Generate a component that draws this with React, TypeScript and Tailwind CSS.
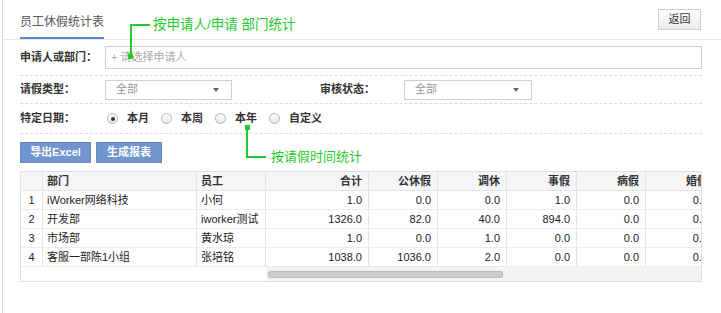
import React from "react";

const font = { fontFamily: '"Liberation Sans", "Noto Sans CJK SC", sans-serif' };

type Row = { no: number; dept: string; emp: string; vals: string[] };

const rows: Row[] = [
  { no: 1, dept: "iWorker网络科技", emp: "小何", vals: ["1.0", "0.0", "0.0", "1.0", "0.0", "0.0"] },
  { no: 2, dept: "开发部", emp: "iworker测试", vals: ["1326.0", "82.0", "40.0", "894.0", "0.0", "0.0"] },
  { no: 3, dept: "市场部", emp: "黄水琼", vals: ["1.0", "0.0", "1.0", "0.0", "0.0", "0.0"] },
  { no: 4, dept: "客服一部陈1小组", emp: "张培铭", vals: ["1038.0", "1036.0", "2.0", "0.0", "0.0", "0.0"] },
];

const numCols = [
  { title: "合计", w: "w-[103px]" },
  { title: "公休假", w: "w-[69px]" },
  { title: "调休", w: "w-[69px]" },
  { title: "事假", w: "w-[70px]" },
  { title: "病假", w: "w-[69px]" },
  { title: "婚假", w: "w-[69px]" },
];

function Select({ width }: { width: string }) {
  return (
    <div className={`${width} h-[20px] border border-[#cfcfcf] bg-white flex items-center justify-between pl-[10px] pr-[12px]`}>
      <span className="text-[11px] text-[#999]">全部</span>
      <span className="w-0 h-0 border-l-[3px] border-r-[3px] border-t-[4px] border-l-transparent border-r-transparent border-t-[#666]" />
    </div>
  );
}

function Radio({ label, checked }: { label: string; checked?: boolean }) {
  return (
    <div className="flex items-center mr-[12px]">
      <span className="w-[11px] h-[11px] rounded-full border border-[#b5b5b5] bg-gradient-to-b from-white to-[#e8e8e8] flex items-center justify-center">
        {checked && <span className="w-[4px] h-[4px] rounded-full bg-[#333]" />}
      </span>
      <span className="ml-[9px] text-[11px] text-[#333] font-bold">{label}</span>
    </div>
  );
}

export default function App() {
  return (
    <div className="w-[721px] h-[313px] bg-white relative overflow-hidden" style={font}>
      <div className="ml-[2px] h-full border-l border-[#d4d4d4]">
        {/* Header */}
        <div className="h-[40px] flex items-end justify-between border-b border-[#e6e6e6] pr-[20px]">
          <div className="ml-[17px] w-[84px] h-[40px] flex items-center justify-center pt-[8px] border-b-2 border-[#5a88cf] text-[12px] text-[#555]">
            员工休假统计表
          </div>
          <div className="self-start mt-[9px] w-[43px] h-[21px] border border-[#cfcfcf] bg-gradient-to-b from-white to-[#ececec] flex items-center justify-center text-[11px] text-[#333]">
            返回
          </div>
        </div>

        {/* Filters */}
        <div className="ml-[17px] w-[682px]">
          <div className="h-[36px] flex items-center border-b border-dashed border-[#dcdcdc]">
            <span className="w-[85px] text-[11px] font-bold text-[#333]">申请人或部门：</span>
            <div className="flex-1 h-[23px] border border-[#cfcfcf] flex items-center pl-[5px] text-[11px] text-[#aaa]">
              + 请选择申请人
            </div>
          </div>
          <div className="h-[28px] flex items-center border-b border-dashed border-[#dcdcdc]">
            <span className="w-[85px] text-[11px] font-bold text-[#333]">请假类型：</span>
            <Select width="w-[127px]" />
            <span className="ml-[88px] w-[84px] text-[11px] font-bold text-[#333]">审核状态：</span>
            <Select width="w-[128px]" />
          </div>
          <div className="h-[30px] flex items-center border-b border-dashed border-[#dcdcdc]">
            <span className="w-[87px] text-[11px] font-bold text-[#333]">特定日期：</span>
            <Radio label="本月" checked />
            <Radio label="本周" />
            <Radio label="本年" />
            <Radio label="自定义" />
          </div>
          <div className="flex gap-[5px] mt-[8px]">
            <div className="w-[71px] h-[21px] bg-[#7095cf] border border-[#6689c2] flex items-center justify-center text-[11px] font-bold text-white">
              导出Excel
            </div>
            <div className="w-[66px] h-[21px] bg-[#7095cf] border border-[#6689c2] flex items-center justify-center text-[11px] font-bold text-white">
              生成报表
            </div>
          </div>

          {/* Table */}
          <div className="mt-[8px] w-[682px] border border-[#e0e0e0] overflow-hidden">
            <div className="w-[760px]">
              <div className="flex h-[19px] bg-[#f6f6f6] border-b border-[#e4e4e4] text-[11px] text-[#333] font-bold">
                <div className="w-[22px] shrink-0 border-r border-[#e4e4e4]" />
                <div className="w-[154px] shrink-0 border-r border-[#e4e4e4] flex items-center pl-[4px]">部门</div>
                <div className="w-[69px] shrink-0 border-r border-[#e4e4e4] flex items-center pl-[4px]">员工</div>
                {numCols.map((c) => (
                  <div key={c.title} className={`${c.w} shrink-0 border-r border-[#e4e4e4] flex items-center justify-end pr-[6px]`}>
                    {c.title}
                  </div>
                ))}
              </div>
              {rows.map((r) => (
                <div key={r.no} className="flex h-[19px] border-b border-[#ececec] text-[11px] text-[#222]">
                  <div className="w-[22px] shrink-0 border-r border-[#e4e4e4] flex items-center justify-center">{r.no}</div>
                  <div className="w-[154px] shrink-0 border-r border-[#e4e4e4] flex items-center pl-[4px]">{r.dept}</div>
                  <div className="w-[69px] shrink-0 border-r border-[#e4e4e4] flex items-center pl-[4px]">{r.emp}</div>
                  {r.vals.map((v, i) => (
                    <div key={i} className={`${numCols[i].w} shrink-0 border-r border-[#e4e4e4] flex items-center justify-end pr-[6px]`}>
                      {v}
                    </div>
                  ))}
                </div>
              ))}
            </div>
            <div className="flex h-[14px]">
              <div className="w-[245px] shrink-0" />
              <div className="flex-1 bg-[#f3f3f3] flex items-center px-[2px]">
                <div className="w-[235px] h-[7px] rounded-[2px] bg-[#cdcdcd] border border-[#bdbdbd]" />
              </div>
            </div>
          </div>
        </div>
      </div>

      {/* Annotation: applicant / department */}
      <div className="absolute left-[130px] top-[25px] w-[2px] h-[32px] bg-[#1fcb2a]" />
      <div className="absolute left-[130px] top-[24px] w-[20px] h-[2px] bg-[#1fcb2a]" />
      <div className="absolute left-[128px] top-[54px] w-[5px] h-[5px] bg-[#1fcb2a]" />
      <div className="absolute left-[153px] top-[16px] text-[13.5px] text-[#1fcb2a] leading-[18px]">按申请人/申请 部门统计</div>

      {/* Annotation: leave period */}
      <div className="absolute left-[245px] top-[125px] w-[5px] h-[5px] bg-[#1fcb2a]" />
      <div className="absolute left-[246px] top-[127px] w-[2px] h-[31px] bg-[#1fcb2a]" />
      <div className="absolute left-[246px] top-[156px] w-[20px] h-[2px] bg-[#1fcb2a]" />
      <div className="absolute left-[271px] top-[148px] text-[13px] text-[#1fcb2a] leading-[18px]">按请假时间统计</div>
    </div>
  );
}
